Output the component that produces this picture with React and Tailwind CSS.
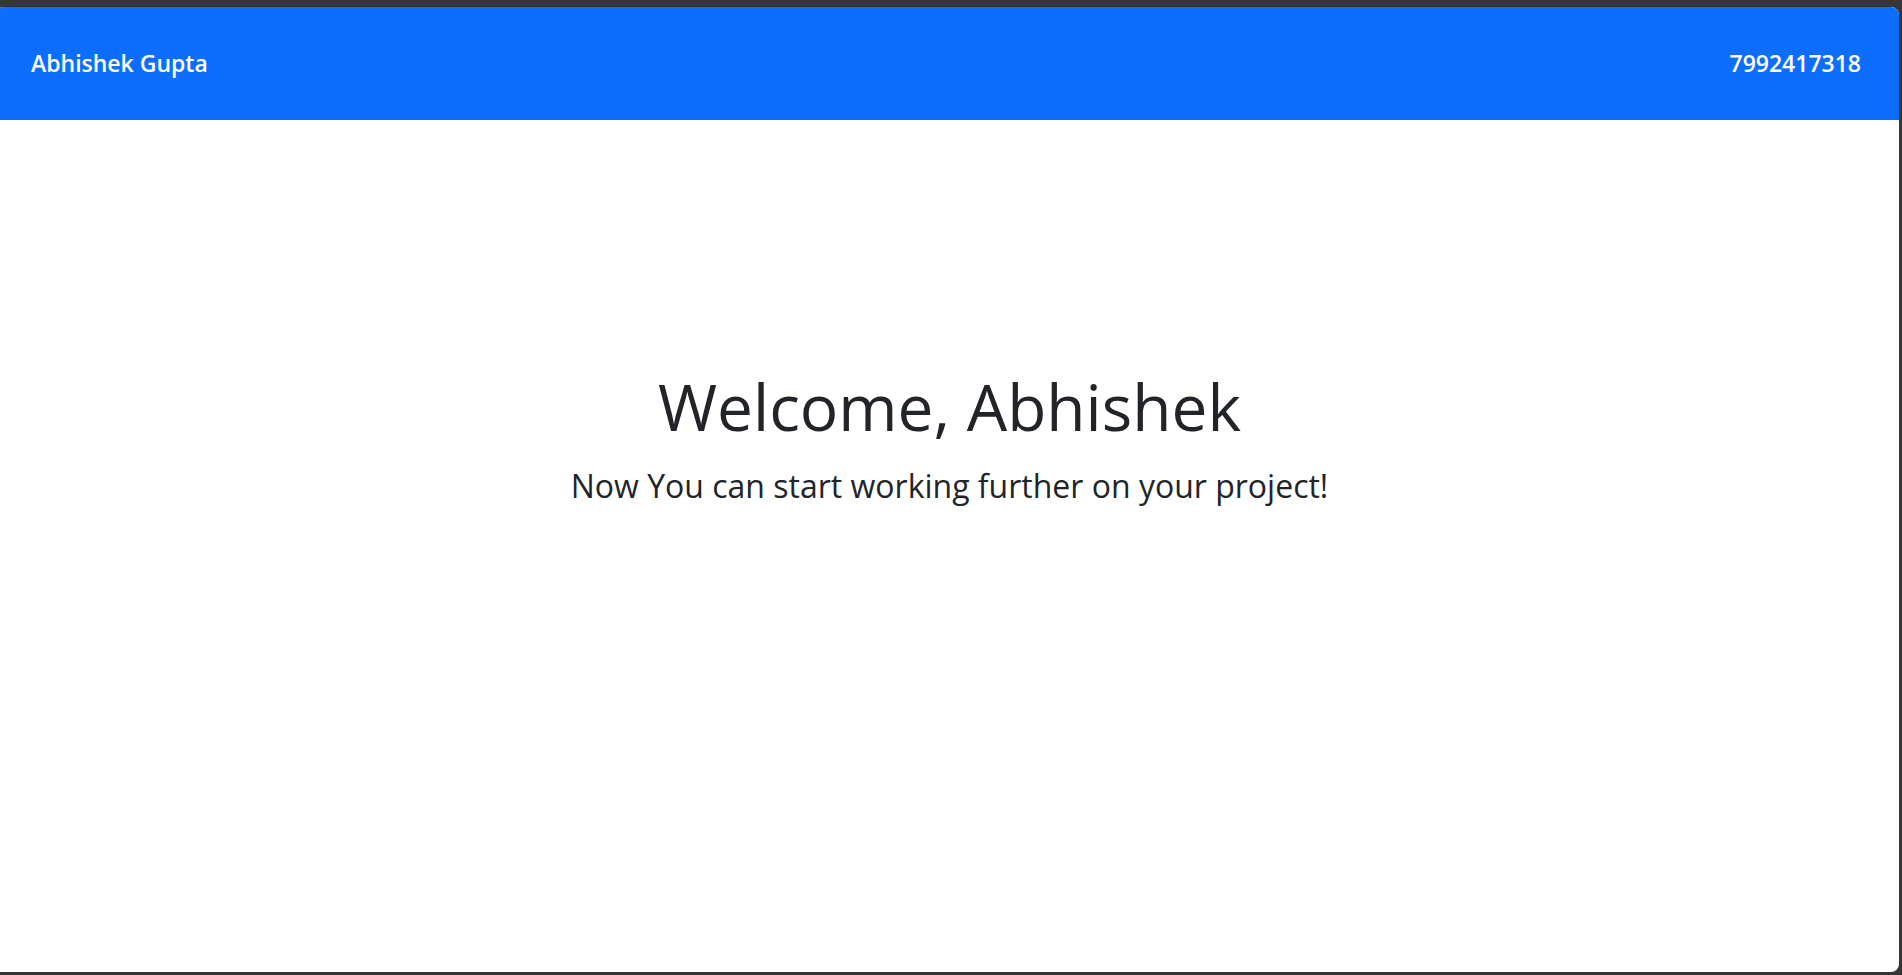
export default function App() {
  return (
    <div className="w-[1902px] h-[975px] bg-[#363636] pt-[7px] pb-[3px] pr-[3px] overflow-hidden" style={{ fontFamily: '"Open Sans", "Noto Sans", sans-serif' }}>
      <div className="h-full bg-white rounded-r-[8px] rounded-tl-[2px] overflow-hidden flex flex-col">
        <header className="h-[113px] shrink-0 bg-[#0d6efd] flex items-center justify-between pl-[31px] pr-[38px] text-white text-[23px] font-semibold">
          <span>Abhishek Gupta</span>
          <span>7992417318</span>
        </header>
        <main className="flex-1 flex flex-col items-center pt-[249px] text-[#212529]">
          <h1 className="text-[64px] leading-[1.2] font-[450]">Welcome, Abhishek</h1>
          <h3 className="text-[32px] leading-[1.2] font-[450] mt-[21px]">Now You can start working further on your project!</h3>
        </main>
      </div>
    </div>
  );
}
